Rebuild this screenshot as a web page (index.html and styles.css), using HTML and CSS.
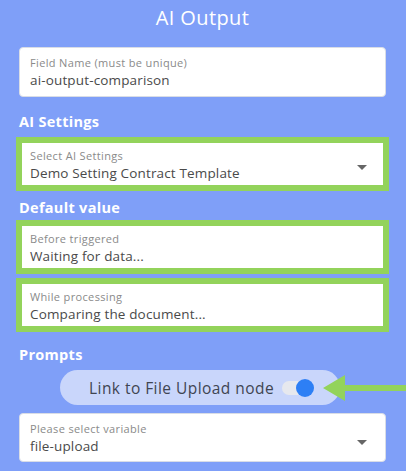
FILE: index.html
```html
<!DOCTYPE html>
<html>
<head>
    <meta charset="UTF-8">
    <title>AI Output</title>
    <link rel="stylesheet" href="styles.css">
</head>
<body>
    <div class="panel">
        <h1 class="title">AI Output</h1>

        <div class="field">
            <span class="label">Field Name (must be unique)</span>
            <span class="value">ai-output-comparison</span>
        </div>

        <h2 class="section first">AI Settings</h2>
        <div class="mark">
            <div class="field inner select">
                <div class="text">
                    <span class="label">Select AI Settings</span>
                    <span class="value">Demo Setting Contract Template</span>
                </div>
                <span class="caret"></span>
            </div>
        </div>

        <h2 class="section defaults">Default value</h2>
        <div class="mark">
            <div class="field inner">
                <span class="label">Before triggered</span>
                <span class="value">Waiting for data...</span>
            </div>
        </div>
        <div class="mark second">
            <div class="field inner">
                <span class="label">While processing</span>
                <span class="value">Comparing the document...</span>
            </div>
        </div>

        <h2 class="section prompts">Prompts</h2>
        <div class="link-row">
            <div class="pill">
                <span>Link to File Upload node</span>
                <span class="switch"><span class="knob"></span></span>
            </div>
            <svg class="arrow" width="84" height="26" viewBox="0 0 84 26">
                <polygon points="0,13 22,0 22,10 84,10 84,16 22,16 22,26" fill="#93d35b"/>
            </svg>
        </div>

        <div class="field select last">
            <div class="text">
                <span class="label">Please select variable</span>
                <span class="value">file-upload</span>
            </div>
            <span class="caret"></span>
        </div>
    </div>
</body>
</html>
```

FILE: styles.css
```css
* {
    margin: 0;
    padding: 0;
    box-sizing: border-box;
}

body {
    background: #7f9ff8;
    font-family: "Open Sans", "DejaVu Sans", sans-serif;
    overflow: hidden;
}

.panel {
    padding: 5px 20px 0 19px;
}

.title {
    font-size: 20px;
    font-weight: 500;
    color: #fff;
    text-align: center;
    line-height: 26px;
    margin-bottom: 16px;
    letter-spacing: 0.4px;
}

.field {
    background: #fff;
    border: 1px solid #d9dde6;
    border-radius: 4px;
    height: 50px;
    padding: 7px 10px 0 10px;
    display: flex;
    flex-direction: column;
}

.label {
    font-size: 11px;
    color: #8a8a8a;
    line-height: 15px;
    letter-spacing: 0.35px;
}

.value {
    font-size: 13.5px;
    color: #4a4a4a;
    line-height: 20px;
    letter-spacing: 0.15px;
}

.section {
    font-size: 14.5px;
    font-weight: 700;
    color: #fff;
    line-height: 22px;
    letter-spacing: 0.3px;
}

.section.first {
    margin: 14px 0 4px 0;
}

.section.defaults {
    margin: 6px 0 1px 0;
}

.section.prompts {
    margin: 12px 0 4px 0;
}

.mark {
    margin: 0 -3px;
    border: 6px solid #93d35b;
    background: #93d35b;
}

.mark.second {
    margin-top: 4px;
}

.field.inner {
    border: none;
    border-radius: 0;
    height: 42px;
    padding: 5px 8px 0 8px;
}

.select {
    flex-direction: row;
    align-items: center;
    justify-content: space-between;
}

.select .text {
    display: flex;
    flex-direction: column;
    align-self: flex-start;
}

.field.inner.select {
    padding-right: 16px;
}

.caret {
    width: 0;
    height: 0;
    border-left: 5px solid transparent;
    border-right: 5px solid transparent;
    border-top: 5px solid #666;
    margin-top: 2px;
}

.field.last {
    height: 49px;
    padding-right: 18px;
}

.link-row {
    height: 35px;
    margin: 0 0 8px 41px;
    position: relative;
}

.pill {
    width: 280px;
    height: 35px;
    border-radius: 18px;
    background: #c9d6fb;
    display: flex;
    align-items: center;
    padding-left: 29px;
    font-size: 15.5px;
    letter-spacing: 0.45px;
    color: #3f4552;
}

.switch {
    margin-left: 8px;
    width: 30px;
    height: 14px;
    border-radius: 7px;
    background: #e6e8ee;
    position: relative;
}

.knob {
    position: absolute;
    right: -2px;
    top: -2px;
    width: 18px;
    height: 18px;
    border-radius: 50%;
    background: #2d7ff5;
}

.arrow {
    position: absolute;
    left: 263px;
    top: 5px;
}
```
